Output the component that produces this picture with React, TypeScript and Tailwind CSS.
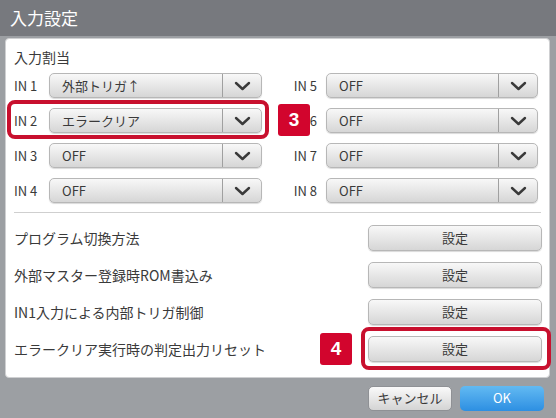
import React from 'react';

const FONT = "'Liberation Sans Narrow', 'Noto Sans CJK JP', sans-serif";
const JP = "'Noto Sans CJK JP', sans-serif";

function Chevron() {
  return (
    <svg width="17" height="10" viewBox="0 0 17 10" fill="none">
      <polyline points="2,2 8.5,8 15,2" stroke="#3a3a3a" strokeWidth="2.4" strokeLinecap="round" strokeLinejoin="round" />
    </svg>
  );
}

function Select({ value, width }: { value: string; width: string }) {
  return (
    <div
      className={`${width} flex h-[25px] items-stretch rounded-[5px] border border-[#b7b7b7] bg-gradient-to-b from-[#f8f8f8] to-[#d6d6d6] shadow-[0_1px_1px_rgba(0,0,0,0.15)]`}
    >
      <div className="flex flex-1 items-center pl-[12px] text-[13px] text-[#3a3a3a]">{value}</div>
      <div className="flex w-[39px] items-center justify-center border-l border-[#a0a0a0]">
        <Chevron />
      </div>
    </div>
  );
}

function Row({ left, right }: { left: [string, string]; right: [string, string] }) {
  return (
    <div className="flex h-[25px] items-center">
      <div className="w-[35px] text-[13px] text-[#3a3a3a]">{left[0]}</div>
      <Select value={left[1]} width="w-[213px]" />
      <div className="ml-[28px] w-[36px] pr-[9px] text-right text-[13px] text-[#3a3a3a]">{right[0]}</div>
      <Select value={right[1]} width="w-[212px]" />
    </div>
  );
}

function SetButton() {
  return (
    <div className="flex h-[26px] w-[174px] items-center justify-center rounded-[5px] border border-[#b7b7b7] bg-gradient-to-b from-[#f8f8f8] to-[#d6d6d6] text-[13px] text-[#3a3a3a] shadow-[0_1px_1px_rgba(0,0,0,0.15)]">
      設定
    </div>
  );
}

function Badge({ n }: { n: string }) {
  return (
    <div className="flex h-[32px] w-[32px] items-center justify-center rounded-[3px] bg-[#d2052d] text-[19px] font-bold text-white" style={{ fontFamily: "'Liberation Sans', sans-serif" }}>
      {n}
    </div>
  );
}

export default function App() {
  const settings = [
    'プログラム切換方法',
    '外部マスター登録時ROM書込み',
    'IN1入力による内部トリガ制御',
    'エラークリア実行時の判定出力リセット',
  ];

  return (
    <div className="flex h-[418px] w-[556px] flex-col bg-[#9c9fa3]" style={{ fontFamily: FONT }}>
      <div className="flex h-[36px] items-center bg-[#77797e] pl-[10px] text-[17px] text-white" style={{ fontFamily: JP }}>
        入力設定
      </div>
      <div className="px-[5px] pt-[2px] pr-[6px]">
        <div className="relative h-[340px] rounded-[4px] border border-[#cfd0d2] bg-white px-[8px] pt-[9px]">
          <div className="mb-[7px] text-[14px] leading-[18px] text-[#3a3a3a]" style={{ fontFamily: JP }}>入力割当</div>
          <div className="flex flex-col gap-[10px]">
            <Row left={['IN 1', '外部トリガ↑']} right={['IN 5', 'OFF']} />
            {/* "IN" of IN 6 is hidden under badge 3 */}
            <Row left={['IN 2', 'エラークリア']} right={['6', 'OFF']} />
            <Row left={['IN 3', 'OFF']} right={['IN 7', 'OFF']} />
            <Row left={['IN 4', 'OFF']} right={['IN 8', 'OFF']} />
          </div>
          <div className="mt-[9px] h-px bg-[#cfcfcf]" />
          <div className="mt-[12px] flex flex-col gap-[11px]">
            {settings.map((s) => (
              <div key={s} className="flex items-center justify-between">
                <div className="text-[14px] text-[#3a3a3a]" style={{ fontFamily: JP }}>{s}</div>
                <div className="mr-[-1px]">
                  <SetButton />
                </div>
              </div>
            ))}
          </div>

          {/* annotation 3 */}
          <div className="absolute left-[1px] top-[61px] h-[39px] w-[262px] rounded-[8px] border-[4px] border-[#c8102e]" />
          <div className="absolute left-[272px] top-[65px]">
            <Badge n="3" />
          </div>
          {/* annotation 4 */}
          <div className="absolute left-[355px] top-[288px] h-[43px] w-[190px] rounded-[8px] border-[4px] border-[#c8102e]" />
          <div className="absolute left-[314px] top-[294px]">
            <Badge n="4" />
          </div>
        </div>
      </div>
      <div className="flex flex-1 items-center justify-end gap-[8px] pr-[12px]">
        <div className="flex h-[25px] w-[84px] items-center justify-center rounded-[5px] border border-[#8f9195] bg-gradient-to-b from-[#fafafa] to-[#d4d4d4] text-[13px] text-[#3a3a3a]" style={{ fontFamily: JP }}>
          キャンセル
        </div>
        <div className="flex h-[25px] w-[84px] items-center justify-center rounded-[5px] bg-gradient-to-b from-[#62baf2] to-[#2c8fe2] text-[13px] text-white">
          OK
        </div>
      </div>
    </div>
  );
}
